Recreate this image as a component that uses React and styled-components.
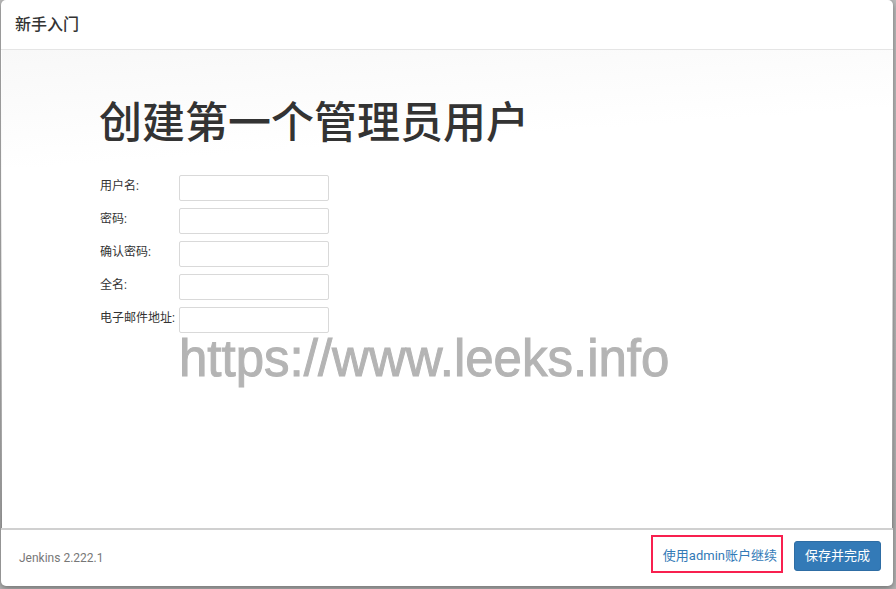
import React from "react";
import styled, { createGlobalStyle } from "styled-components";

const GlobalStyle = createGlobalStyle`
  * { box-sizing: border-box; }
  body {
    margin: 0;
    background: linear-gradient(#bcbcbc, #b4b4b4);
    color: #333;
    font-family: Roboto, "Noto Sans CJK SC", sans-serif;
    font-size: 13px;
  }
`;

const Dialog = styled.div`
  display: flex;
  flex-direction: column;
  min-height: calc(100vh - 3px);
  margin: 0 3px 3px 1px;
  background: #fff;
  border-radius: 5px;
  box-shadow: 0 2px 6px rgba(0, 0, 0, 0.4);
`;

const Header = styled.header`
  display: flex;
  align-items: center;
  height: 50px;
  padding: 0 14px;
  border-bottom: 1px solid #e5e5e5;
`;

const Title = styled.h4`
  margin: 0;
  font-size: 16px;
  line-height: 24px;
  font-weight: 500;
`;

const Body = styled.main`
  flex: 1;
  padding: 41px 97px 0;
  border: solid #8a8a8a;
  border-width: 0 1px;
  border-image: linear-gradient(#fff, #f4f4f4 30%, #888) 1;
  background: linear-gradient(176deg, #f8f8f8, #fff 120px);
`;

const Heading = styled.h1`
  margin: 0 0 19px;
  font-size: 43px;
  line-height: 64px;
  font-weight: 500;
`;

const Fields = styled.table`
  margin-left: 1px;
  border-collapse: collapse;
`;

const LabelCell = styled.td`
  height: 33px;
  padding: 0 4px 0 0;
  vertical-align: top;
  font-size: 12px;
  line-height: 24px;
  white-space: nowrap;
`;

const InputCell = styled.td`
  padding: 1px 0 0;
  vertical-align: top;
`;

const TextInput = styled.input`
  display: block;
  width: 150px;
  height: 26px;
  padding: 2px 6px;
  border: 1px solid #d9d9d9;
  border-radius: 2px;
  background: #fff;
  font: inherit;
`;

const Watermark = styled.p`
  margin: 0 0 0 80px;
  color: #b4b4b4;
  font-family: "Liberation Sans", Arial, sans-serif;
  font-size: 51px;
  line-height: 40px;
  -webkit-text-stroke: 1px #b4b4b4;
`;

const Footer = styled.footer`
  display: flex;
  align-items: center;
  height: 58px;
  padding: 0 12px 4px 18px;
  border-top: 2px solid #d0d0d0;
`;

const Version = styled.span`
  margin-right: auto;
  padding-top: 4px;
  color: #777;
  font-size: 12px;
  line-height: 20px;
`;

const Highlight = styled.div`
  display: flex;
  align-items: center;
  height: 38px;
  margin: 0 11px 4px 0;
  padding-top: 4px;
  border: 2px solid #f8204f;
`;

const LinkButton = styled.button`
  padding: 0 4px 0 10px;
  border: 0;
  background: none;
  color: #337ab7;
  font: inherit;
  line-height: 20px;
  cursor: pointer;
`;

const PrimaryButton = styled.button`
  height: 30px;
  padding: 0 10px;
  border: 1px solid #2e6da4;
  border-radius: 3px;
  background: #337ab7;
  color: #fff;
  font: inherit;
  line-height: 20px;
  cursor: pointer;
`;

const FIELDS = [
  { id: "username", label: "用户名:", type: "text" },
  { id: "password1", label: "密码:", type: "password" },
  { id: "password2", label: "确认密码:", type: "password" },
  { id: "fullname", label: "全名:", type: "text" },
  { id: "email", label: "电子邮件地址:", type: "text" },
];

export default function App() {
  return (
    <>
      <GlobalStyle />
      <Dialog>
        <Header>
          <Title>新手入门</Title>
        </Header>
        <Body>
          <Heading>创建第一个管理员用户</Heading>
          <Fields>
            <tbody>
              {FIELDS.map(({ id, label, type }) => (
                <tr key={id}>
                  <LabelCell>
                    <label htmlFor={id}>{label}</label>
                  </LabelCell>
                  <InputCell>
                    <TextInput id={id} name={id} type={type} />
                  </InputCell>
                </tr>
              ))}
            </tbody>
          </Fields>
          <Watermark>https://www.leeks.info</Watermark>
        </Body>
        <Footer>
          <Version>Jenkins 2.222.1</Version>
          <Highlight>
            <LinkButton type="button">使用admin账户继续</LinkButton>
          </Highlight>
          <PrimaryButton type="button">保存并完成</PrimaryButton>
        </Footer>
      </Dialog>
    </>
  );
}
